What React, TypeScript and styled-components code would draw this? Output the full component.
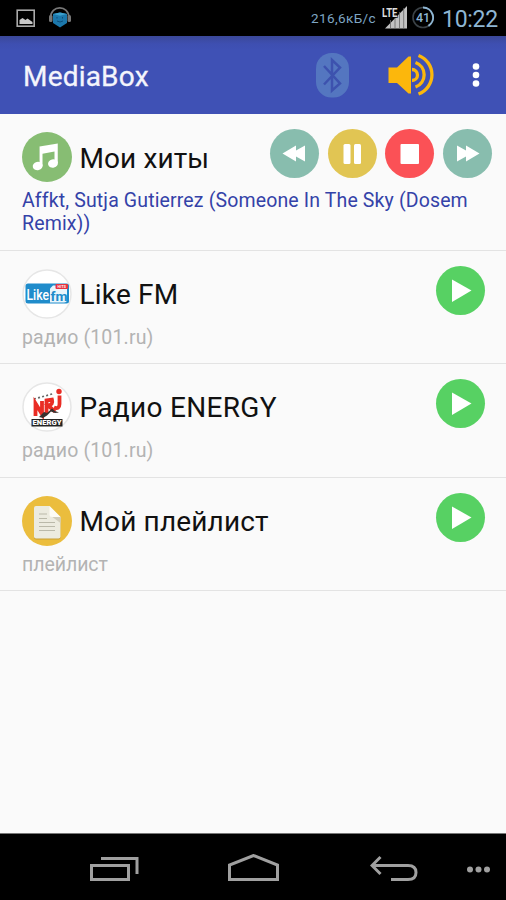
import React from 'react';
import styled, { createGlobalStyle } from 'styled-components';

const GlobalStyle = createGlobalStyle`
  * { box-sizing: border-box; }
  body { margin: 0; background: #fafafa; font-family: Roboto, "Liberation Sans", sans-serif; }
  svg { display: block; flex: none; }
`;

const Screen = styled.div`
  width: 506px;
  height: 900px;
  display: flex;
  flex-direction: column;
  overflow: hidden;
  background: #fafafa;
`;

const StatusBar = styled.header`
  height: 36px;
  flex: none;
  display: flex;
  align-items: center;
  justify-content: space-between;
  padding: 0 8px 0 16px;
  background: #000;
  color: #8eb6d3;
`;

const StatusGroup = styled.div`
  display: flex;
  align-items: center;
  white-space: nowrap;
`;

const NetSpeed = styled.span`
  width: 64px;
  margin-right: 7px;
  font-size: 13.5px;
  letter-spacing: 0.4px;
  color: #7fa6c4;
`;

const Clock = styled.span`
  width: 56px;
  margin-left: 8px;
  padding-top: 3px;
  font-size: 23px;
  line-height: 33px;
  letter-spacing: -0.3px;
`;

const AppBar = styled.div`
  height: 78px;
  flex: none;
  display: flex;
  align-items: center;
  padding: 0 24px 0 23px;
  background: linear-gradient(#3a4899 0, #3e4fb1 8px, #3f51b5 14px);
`;

const AppTitle = styled.h1`
  flex: 1;
  margin: 3px 0 0;
  font-size: 28px;
  font-weight: 400;
  line-height: 36px;
  letter-spacing: 0.2px;
  color: #f4f5fc;
  -webkit-text-stroke: 0.3px #f4f5fc;
`;

const AppActions = styled.div`
  display: flex;
  align-items: center;
`;

const List = styled.main`
  flex: 1;
  min-height: 0;
`;

const Row = styled.section<{ $height: number }>`
  height: ${(p) => p.$height}px;
  padding: 18px 21px 0 22px;
  border-bottom: 1px solid #e3e3e3;
`;

const RowHead = styled.div`
  height: 50px;
  display: flex;
  align-items: center;
`;

const Name = styled.h2<{ $spacing: number; $active?: boolean }>`
  flex: 1;
  margin: ${(p) => (p.$active ? 3 : 1)}px 0 0 7.5px;
  font-size: 28px;
  font-weight: 400;
  line-height: 36px;
  letter-spacing: ${(p) => p.$spacing}px;
  white-space: nowrap;
  color: #111;
`;

const Controls = styled.div<{ $wide?: boolean }>`
  display: flex;
  gap: 8.6px;
  margin: ${(p) => (p.$wide ? '-7px -7px 0 0' : '-7px 0 0 0')};
`;

const Detail = styled.p<{ $active?: boolean; $spacing: number }>`
  margin: ${(p) => (p.$active ? '7px 0 0' : '6px 0 0')};
  font-size: 19.5px;
  line-height: ${(p) => (p.$active ? 23 : 26)}px;
  letter-spacing: ${(p) => p.$spacing}px;
  color: ${(p) => (p.$active ? '#3442a8' : '#b3b3b3')};
`;

const RoundButton = styled.button<{ $color: string }>`
  width: 49px;
  height: 49px;
  padding: 0;
  border: 0;
  border-radius: 50%;
  background: ${(p) => p.$color};
`;

const NavBar = styled.nav`
  height: 67px;
  flex: none;
  display: flex;
  align-items: center;
  padding: 3px 15px 0 89px;
  border-top: 1px solid #777;
  background: #000;
`;

const NavIcon = styled.svg<{ $gap?: number }>`
  margin-left: ${(p) => p.$gap ?? 0}px;
`;

type Glyph = 'prev' | 'pause' | 'stop' | 'next' | 'play';

const glyphColors: Record<Glyph, string> = {
  prev: '#88bdae',
  pause: '#e1c553',
  stop: '#fb5156',
  next: '#88bdae',
  play: '#57d163',
};

const glyphs: Record<Glyph, React.ReactNode> = {
  prev: <path d="M12.5 24.5 26 16.5v5l9-5v16l-9-5v5z" />,
  next: <path d="M36.5 24.5 23 16.5v5l-9-5v16l9-5v5z" />,
  pause: (
    <>
      <rect x="15.5" y="15" width="7" height="20" rx="1.5" />
      <rect x="26" y="15" width="7" height="20" rx="1.5" />
    </>
  ),
  stop: <rect x="15.5" y="15" width="18.5" height="20" rx="1" />,
  play: <path d="M16 13.5 35.5 24.5 16 36z" />,
};

const MediaButton = ({ kind }: { kind: Glyph }) => (
  <RoundButton $color={glyphColors[kind]} aria-label={kind}>
    <svg width="49" height="49" fill="#fff">{glyphs[kind]}</svg>
  </RoundButton>
);

const HitsAvatar = () => (
  <svg width="50" height="50" viewBox="0 0 50 50">
    <circle cx="25" cy="25" r="25" fill="#87bd73" />
    <path d="M18.7 35V16L34.7 13.5V32" fill="none" stroke="#6da05c" strokeWidth="2.6" />
    <path d="M17.5 14.5 35.8 11.5V31H32.5V19.5L20.5 21.7V34H17.5z" fill="#fff" />
    <ellipse cx="15.7" cy="34" rx="5" ry="4.2" transform="rotate(-15 15.7 34)" fill="#fff" />
    <ellipse cx="31" cy="31.5" rx="5" ry="4.2" transform="rotate(-15 31 31.5)" fill="#fff" />
  </svg>
);

const LikeAvatar = () => (
  <svg width="50" height="50" viewBox="0 0 50 50" fontFamily="Roboto, sans-serif">
    <circle cx="25" cy="25" r="24" fill="#fff" stroke="#e6e6e6" strokeWidth="1.5" />
    <rect x="3.5" y="14.5" width="43.5" height="20" rx="2.5" fill="#208ccb" />
    <path d="M31 16.5h14v14q0 3-3 3H28V19.5z" fill="#e9f5fb" />
    <rect x="33.5" y="15" width="12.5" height="5" rx="1" fill="#e7333f" />
    <text x="35.5" y="18.7" fontSize="3.5" fontWeight="700" fill="#fff" textLength="8.5">HITS</text>
    <text x="4.5" y="31.3" fontSize="14" fontWeight="500" fill="#fff" textLength="22.5" lengthAdjust="spacingAndGlyphs">Like</text>
    <text x="28.5" y="32" fontSize="13" fontWeight="700" fill="#208ccb" textLength="17" lengthAdjust="spacingAndGlyphs">fm</text>
  </svg>
);

const EnergyAvatar = () => (
  <svg width="50" height="50" viewBox="0 0 50 50" fontFamily="Roboto, sans-serif" fontWeight="900">
    <circle cx="25" cy="25" r="24" fill="#fff" stroke="#e6e6e6" strokeWidth="1.5" />
    <path d="M12 17 32 11.5" stroke="#666" strokeWidth="1.6" strokeDasharray="2 2.2" />
    <g fill="none" stroke="#e92d25" strokeWidth="3.8">
      <path d="M13.5 34V21.500L20 32V19" />
      <path d="M24.500 31.500V18.500L30 17.700Q31.500 22.500 26 23.500L33 29.500" />
      <path d="M32 25.500Q37.500 27.500 37.500 22V13.500" />
    </g>
    <circle cx="37" cy="9.500" r="2.700" fill="#e92d25" />
    <path d="M17 35 22 30 25 31 30 26.500 33 29 37 30.500 33 31 29 29.500 25 33.500 21 36z" fill="#38302e" />
    <rect x="9.500" y="37" width="31" height="7.500" fill="#242424" />
    <text x="10.500" y="43.200" fontSize="7" fill="#fff" textLength="29" lengthAdjust="spacingAndGlyphs">ENERGY</text>
  </svg>
);

const PlaylistAvatar = () => (
  <svg width="50" height="50" viewBox="0 0 50 50">
    <circle cx="25" cy="25" r="25" fill="#ebbd3d" />
    <path d="M12 13q0-2 2-2h13.5L38.5 22v19.5q0 2-2 2H14q-2 0-2-2z" fill="#c79f36" />
    <path d="M12 12q0-2 2-2h13.5L38.5 21v19.5q0 2-2 2H14q-2 0-2-2z" fill="#ecebdf" />
    <path d="M29 20 38.5 21V27z" fill="#d1cdbb" />
    <path d="M27.5 10 38.5 21H30q-2.5 0-2.5-2.5z" fill="#fdfcf5" />
    <path d="M17 18h8M17 22.500h8M17 26.500h16M17 30.500h16M17 34.500h16" stroke="#bab9a9" strokeWidth="1.200" />
  </svg>
);

interface Item {
  name: string;
  detail: string;
  avatar: React.ReactNode;
  controls: Glyph[];
  height: number;
  spacing: number;
  detailSpacing: number;
  active?: boolean;
}

const items: Item[] = [
  { name: 'Мои хиты', detail: 'Affkt, Sutja Gutierrez (Someone In The Sky (Dosem Remix))', avatar: <HitsAvatar />, controls: ['prev', 'pause', 'stop', 'next'], height: 137, spacing: 0.1, detailSpacing: 0.14, active: true },
  { name: 'Like FM', detail: 'радио (101.ru)', avatar: <LikeAvatar />, controls: ['play'], height: 113, spacing: 0.2, detailSpacing: 0.15 },
  { name: 'Радио ENERGY', detail: 'радио (101.ru)', avatar: <EnergyAvatar />, controls: ['play'], height: 114, spacing: 0.3, detailSpacing: 0.15 },
  { name: 'Мой плейлист', detail: 'плейлист', avatar: <PlaylistAvatar />, controls: ['play'], height: 113, spacing: 0.15, detailSpacing: -0.05 },
];

export default function App() {
  return (
    <Screen>
      <GlobalStyle />
      <StatusBar>
        <StatusGroup>
          <svg width="60" height="36" viewBox="0 0 60 36">
            <rect x="1.2" y="10.2" width="17" height="16" fill="none" stroke="#aaa" strokeWidth="1.6" />
            <path d="M3.5 24V20l3-2 3 2 2-1.5 5 3.5v2z" fill="#c8c8c8" />
            <path d="M34.5 18C34.5 4.5 53 4.5 53 18" fill="none" stroke="#777" strokeWidth="1.7" />
            <path d="M37 14l7-1.5 7 1.5v9l-7 4.5-7-4.5z" fill="#1c78ac" />
            <path d="M37 14l7-1.5 7 1.5-7 1.8z" fill="#3ca0cd" />
            <path d="M41 17v1.5M46.5 17v1.5M41 21q3 2 6 0" fill="none" stroke="#0d4d78" />
            <rect x="33" y="15" width="3.5" height="7" rx="1.5" fill="#777" />
            <rect x="51.5" y="15" width="3.5" height="7" rx="1.5" fill="#777" />
          </svg>
        </StatusGroup>
        <StatusGroup>
          <NetSpeed>216,6кБ/с</NetSpeed>
          <svg width="52" height="36" viewBox="0 0 52 36" fontFamily="Roboto, sans-serif">
            <path d="M3 28.5 25 6V28.5z" fill="#c2c2c2" />
            <path d="M8.5 20v9M13 14v15M17.5 12v17M21.7 8v21" stroke="#666" strokeWidth="0.8" />
            <text x="0" y="17" fontSize="12.5" fontWeight="700" fill="#ddd" stroke="#000" strokeWidth="1.4" paintOrder="stroke" textLength="15.5" lengthAdjust="spacingAndGlyphs">LTE</text>
            <circle cx="41" cy="17.5" r="10" fill="none" stroke="#3b4247" strokeWidth="1.6" />
            <path d="M41 7.5A10 10 0 0 1 46.5 25.9" fill="none" stroke="#8eb6d3" strokeWidth="1.9" />
            <text x="41" y="22" fontSize="12.5" fontWeight="500" fill="#8eb6d3" textAnchor="middle">41</text>
          </svg>
          <Clock>10:22</Clock>
        </StatusGroup>
      </StatusBar>

      <AppBar>
        <AppTitle>MediaBox</AppTitle>
        <AppActions>
          <svg width="166" height="78" viewBox="0 0 166 78">
            <rect x="0" y="17" width="33" height="44.5" rx="15.5" fill="#5476c0" />
            <path d="M8 30 24 47.5 16 54.5V24l8 7.5L8 48.5" fill="none" stroke="#3d52ae" strokeWidth="2.5" />
            <path d="M72.500 31.500H81L92.500 20.500H95V57.500H92.500L81 47H72.500z" fill="#fcb70c" />
            <g fill="none" stroke="#fcb70c" strokeWidth="3.300">
              <path d="M96 33.500A5.500 5.500 0 0 1 96 44.500" />
              <path d="M99.500 26.500A13 13 0 0 1 99.500 51" />
              <path d="M102.500 19.500A20.500 20.500 0 0 1 102.500 58" />
            </g>
            <g fill="#fff">
              <circle cx="160" cy="30.500" r="3.300" />
              <circle cx="160" cy="39" r="3.300" />
              <circle cx="160" cy="47.500" r="3.300" />
            </g>
          </svg>
        </AppActions>
      </AppBar>

      <List>
        {items.map((item) => (
          <Row key={item.name} $height={item.height}>
            <RowHead>
              {item.avatar}
              <Name $spacing={item.spacing} $active={item.active}>{item.name}</Name>
              <Controls $wide={item.active}>
                {item.controls.map((kind) => <MediaButton key={kind} kind={kind} />)}
              </Controls>
            </RowHead>
            <Detail $active={item.active} $spacing={item.detailSpacing}>{item.detail}</Detail>
          </Row>
        ))}
      </List>

      <NavBar>
        <NavIcon width="51" height="30" viewBox="0 0 51 30" fill="none" stroke="#a0a0a0" strokeWidth="3">
          <rect x="2.5" y="11.5" width="37" height="14" />
          <path d="M12 4.5H48V20" />
        </NavIcon>
        <NavIcon $gap={87} width="54" height="30" viewBox="0 0 54 30" fill="none" stroke="#a0a0a0" strokeWidth="3">
          <path d="M2.5 25.5V11L26.5 1.5 50.5 11V25.5z" />
        </NavIcon>
        <NavIcon $gap={89} width="48" height="30" viewBox="0 0 48 30" fill="none" stroke="#a0a0a0" strokeWidth="3">
          <path d="M10.5 3 2 11.5 10.5 20M2 11.5H38Q46 11.5 46 18.5T38 25.5H21" />
        </NavIcon>
        <NavIcon $gap={48} width="25" height="30" viewBox="0 0 25 30" fill="#a0a0a0">
          <circle cx="4" cy="15.5" r="3" />
          <circle cx="12.5" cy="15.5" r="3" />
          <circle cx="21" cy="15.5" r="3" />
        </NavIcon>
      </NavBar>
    </Screen>
  );
}
